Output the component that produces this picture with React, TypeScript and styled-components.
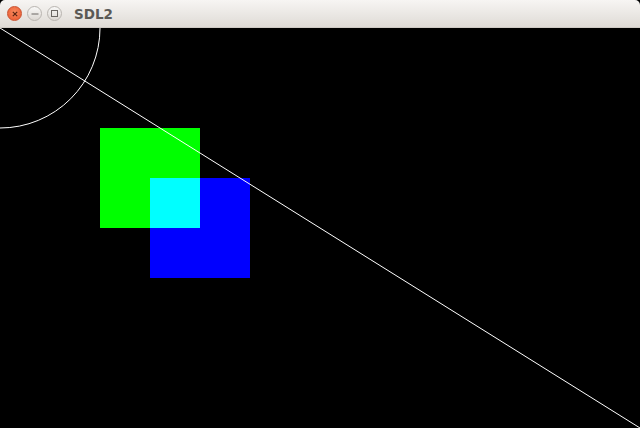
import React from "react";
import styled, { createGlobalStyle } from "styled-components";

const Global = createGlobalStyle`
  html, body { margin: 0; padding: 0; background: #000; }
  body { width: 640px; height: 428px; overflow: hidden; }
`;

const Window = styled.div`
  width: 640px;
  height: 428px;
  display: flex;
  flex-direction: column;
  background: #000;
`;

const TitleBar = styled.div`
  height: 28px;
  flex: 0 0 28px;
  display: flex;
  align-items: center;
  padding-left: 7px;
  gap: 5px;
  box-sizing: border-box;
  border-radius: 5px 5px 0 0;
  background: linear-gradient(#f7f5f3, #dfdbd6);
  border-bottom: 1px solid #cfcac4;
`;

const Btn = styled.div<{ $close?: boolean }>`
  width: 15px;
  height: 15px;
  border-radius: 50%;
  box-sizing: border-box;
  display: flex;
  align-items: center;
  justify-content: center;
  border: 1px solid ${(p) => (p.$close ? "#c9502e" : "#b9b5b0")};
  background: ${(p) =>
    p.$close
      ? "radial-gradient(circle at 50% 40%, #f88a5e, #e9562e)"
      : "linear-gradient(#f9f8f7, #dcd8d3)"};
`;

const Title = styled.div`
  margin-left: 7px;
  font-family: "DejaVu Sans", sans-serif;
  font-weight: bold;
  font-size: 13.5px;
  color: #5b5955;
`;

const Canvas = styled.svg`
  display: block;
  flex: 0 0 auto;
`;

export default function App() {
  return (
    <>
      <Global />
      <Window>
        <TitleBar>
          <Btn $close>
            <svg width="6" height="6" viewBox="0 0 6 6">
              <path d="M0.8 0.8L5.2 5.2M5.2 0.8L0.8 5.2" stroke="#5a2412" strokeWidth="1.2" />
            </svg>
          </Btn>
          <Btn>
            <svg width="8" height="2" viewBox="0 0 8 2">
              <path d="M0.5 1H7.5" stroke="#6a6763" strokeWidth="1" />
            </svg>
          </Btn>
          <Btn>
            <svg width="7" height="7" viewBox="0 0 7 7">
              <rect x="0.5" y="0.5" width="6" height="6" fill="none" stroke="#6a6763" strokeWidth="1" />
            </svg>
          </Btn>
          <Title>SDL2</Title>
        </TitleBar>
        <Canvas width="640" height="400" viewBox="0 0 640 400" shapeRendering="crispEdges">
          <rect x="0" y="0" width="640" height="400" fill="#000" />
          <rect x="100" y="100" width="100" height="100" fill="#00ff00" />
          <rect x="150" y="150" width="100" height="100" fill="#0000ff" />
          <rect x="150" y="150" width="50" height="50" fill="#00ffff" />
          <circle cx="0" cy="0" r="100" fill="none" stroke="#fff" strokeWidth="1" shapeRendering="auto" />
          <line x1="0" y1="0" x2="640" y2="400" stroke="#fff" strokeWidth="1" shapeRendering="auto" />
        </Canvas>
      </Window>
    </>
  );
}
